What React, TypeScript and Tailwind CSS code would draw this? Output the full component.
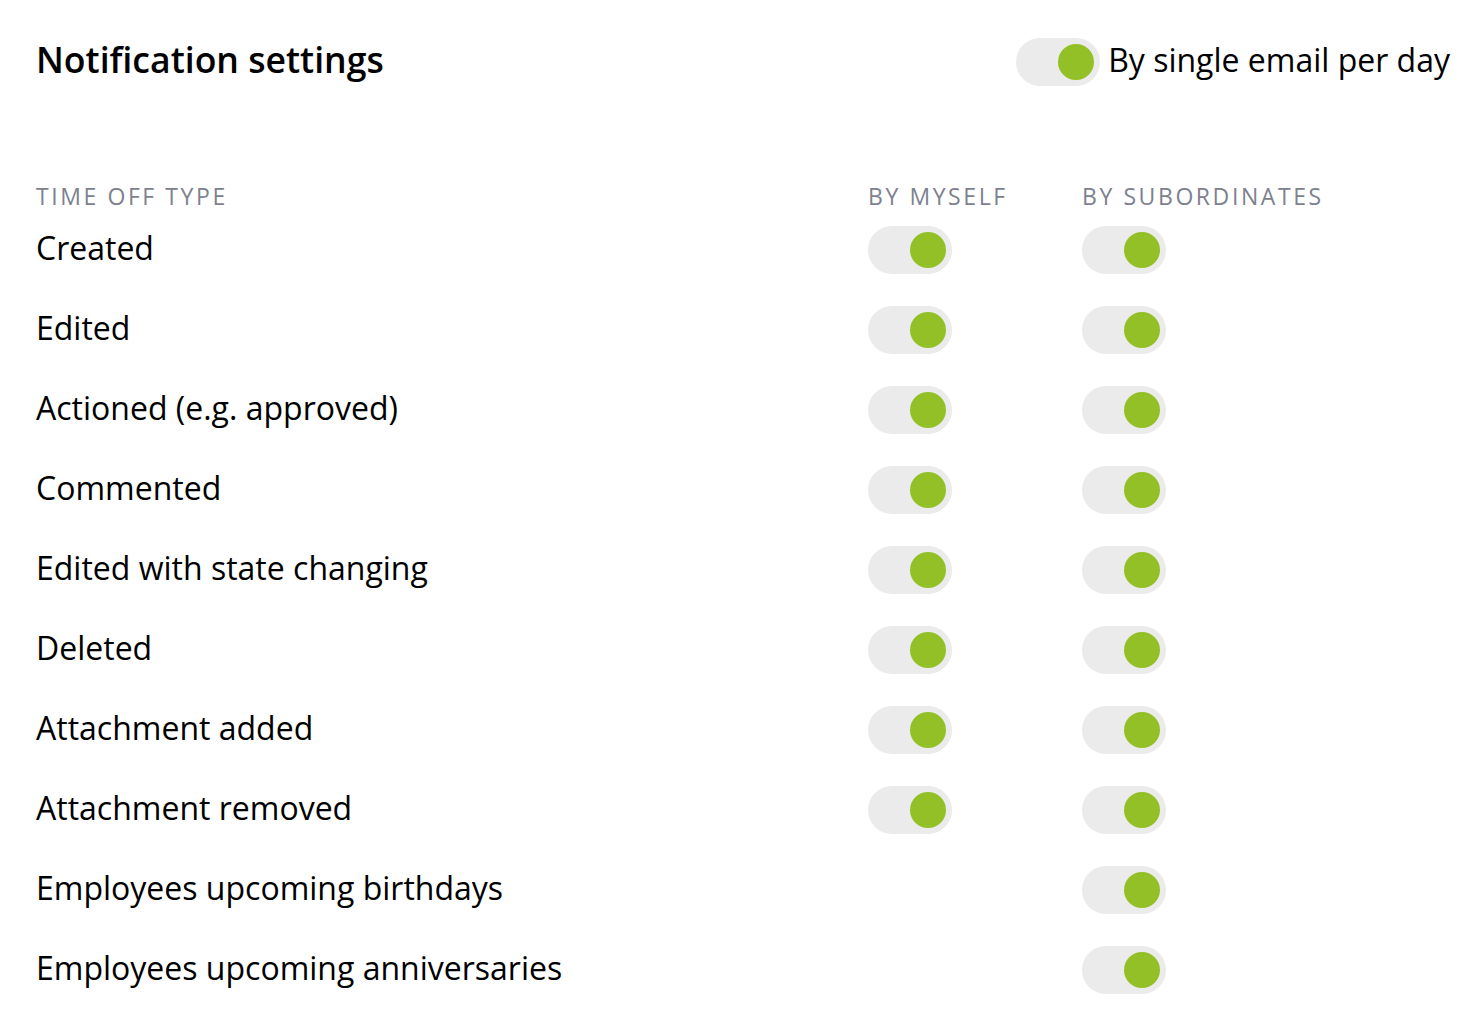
import React from "react";

function Toggle() {
  return (
    <div className="relative h-[48px] w-[84px] shrink-0 rounded-full bg-[#ebebeb]">
      <div className="absolute right-[6px] top-[6px] h-[36px] w-[36px] rounded-full bg-[#93c026]" />
    </div>
  );
}

const rows: { label: string; myself: boolean }[] = [
  { label: "Created", myself: true },
  { label: "Edited", myself: true },
  { label: "Actioned (e.g. approved)", myself: true },
  { label: "Commented", myself: true },
  { label: "Edited with state changing", myself: true },
  { label: "Deleted", myself: true },
  { label: "Attachment added", myself: true },
  { label: "Attachment removed", myself: true },
  { label: "Employees upcoming birthdays", myself: false },
  { label: "Employees upcoming anniversaries", myself: false },
];

const head = "h-[26px] text-[23px] font-medium leading-[24px] tracking-[0.112em] text-[#7d818e]";

export default function App() {
  return (
    <div
      className="min-h-[1022px] w-[1468px] bg-white pl-[36px] pr-[18px] pt-[38px] text-black"
      style={{ fontFamily: '"Open Sans", sans-serif' }}
    >
      <div className="flex h-[48px] items-center justify-between">
        <h1 className="pb-[4px] text-[35.6px] font-semibold leading-none">Notification settings</h1>
        <div className="flex items-center gap-[8px]">
          <Toggle />
          <span className="pb-[4px] text-[32px] leading-none">By single email per day</span>
        </div>
      </div>
      <div className="mt-[98px] grid grid-cols-[832px_214px_1fr]">
        <div className={head}>TIME OFF TYPE</div>
        <div className={head}>BY MYSELF</div>
        <div className={head}>BY SUBORDINATES</div>
        {rows.map((r) => (
          <React.Fragment key={r.label}>
            <div className="flex h-[80px] items-center pb-[4px] text-[32px]">{r.label}</div>
            <div className="flex h-[80px] items-center">{r.myself ? <Toggle /> : null}</div>
            <div className="flex h-[80px] items-center">
              <Toggle />
            </div>
          </React.Fragment>
        ))}
      </div>
    </div>
  );
}
